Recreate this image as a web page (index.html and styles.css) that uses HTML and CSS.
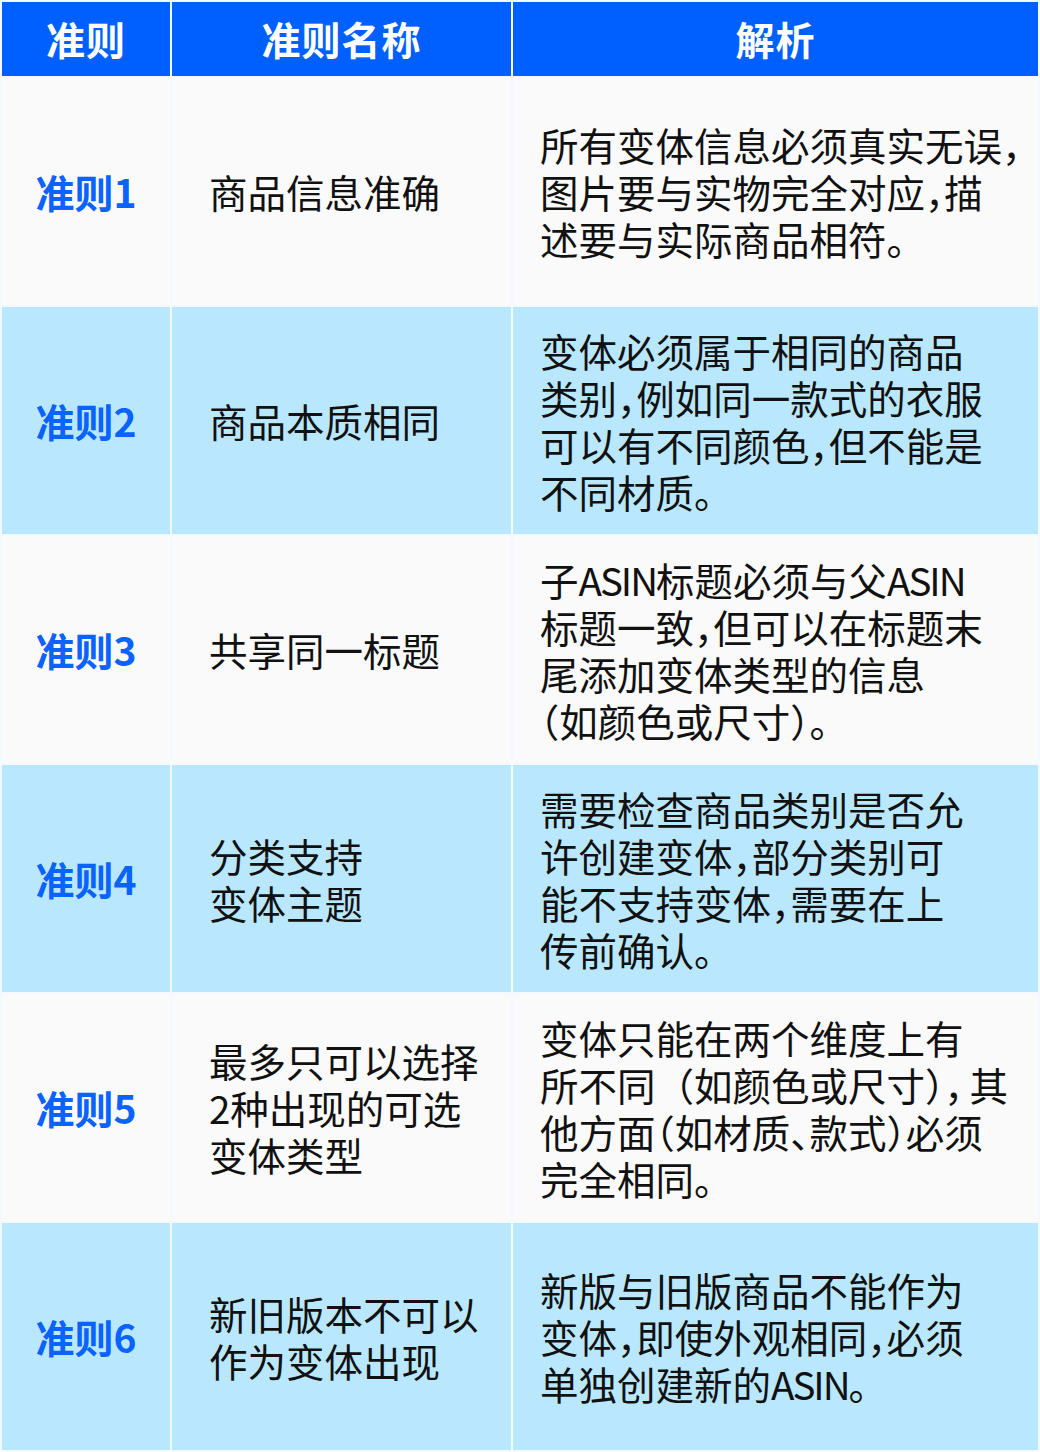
FILE: index.html
```html
<!DOCTYPE html>
<html lang="zh-CN">
<head>
<meta charset="utf-8">
<title>准则</title>
<link rel="stylesheet" href="styles.css">
</head>
<body>
<div class="table">
  <div class="th">准则</div>
  <div class="th">准则名称</div>
  <div class="th">解析</div>

  <div class="cell rule odd">准则1</div>
  <div class="cell name odd"><div class="txt">商品信息准确</div></div>
  <div class="cell desc odd"><div class="txt">所有变体信息必须真实无误，<br>图片要与实物完全对应，描<br>述要与实际商品相符。</div></div>

  <div class="cell rule even">准则2</div>
  <div class="cell name even"><div class="txt">商品本质相同</div></div>
  <div class="cell desc even"><div class="txt">变体必须属于相同的商品<br>类别，例如同一款式的衣服<br>可以有不同颜色，但不能是<br>不同材质。</div></div>

  <div class="cell rule odd">准则3</div>
  <div class="cell name odd"><div class="txt">共享同一标题</div></div>
  <div class="cell desc odd"><div class="txt">子<span class="latin">ASIN</span>标题必须与父<span class="latin">ASIN</span><br>标题一致，但可以在标题末<br>尾添加变体类型的信息<br>（如颜色或尺寸）。</div></div>

  <div class="cell rule even">准则4</div>
  <div class="cell name even"><div class="txt">分类支持<br>变体主题</div></div>
  <div class="cell desc even"><div class="txt">需要检查商品类别是否允<br>许创建变体，部分类别可<br>能不支持变体，需要在上<br>传前确认。</div></div>

  <div class="cell rule odd">准则5</div>
  <div class="cell name odd"><div class="txt">最多只可以选择<br>2种出现的可选<br>变体类型</div></div>
  <div class="cell desc odd"><div class="txt">变体只能在两个维度上有<br>所不同<span class="full">（</span>如颜色或尺寸），<span class="gap">其</span><br>他方面（如材质、款式）必须<br>完全相同。</div></div>

  <div class="cell rule even">准则6</div>
  <div class="cell name even"><div class="txt">新旧版本不可以<br>作为变体出现</div></div>
  <div class="cell desc even"><div class="txt">新版与旧版商品不能作为<br>变体，即使外观相同，必须<br>单独创建新的<span class="latin">ASIN</span>。</div></div>
</div>
</body>
</html>
```
FILE: styles.css
```css
html, body {
  margin: 0;
  padding: 0;
  background: #ffffff;
}

body {
  font-family: "Noto Sans CJK SC", "Noto Sans", sans-serif;
  width: 1040px;
  height: 1452px;
  overflow: hidden;
}

.table {
  display: grid;
  grid-template-columns: 168px 339px 525px;
  grid-template-rows: 74px repeat(6, 227px);
  gap: 2px;
  padding: 2px;
  background: #f4f9ff;
}

.th {
  background: #0060ff;
  color: #ffffff;
  font-weight: 700;
  font-size: 39px;
  display: flex;
  align-items: center;
  justify-content: center;
  letter-spacing: 1px;
  padding-bottom: 3px;
}

.cell {
  display: flex;
  align-items: center;
  font-size: 38.5px;
  line-height: 47px;
  color: #111111;
  white-space: nowrap;
}

.odd { background: #fafafa; }
.even { background: #b9e8fe; }

.rule {
  justify-content: center;
  color: #0a62ff;
  font-weight: 700;
  font-size: 39px;
}

.name {
  padding-left: 37px;
}

.desc {
  padding-left: 27px;
  font-feature-settings: "halt" 1;
}

.desc .full {
  font-feature-settings: "halt" 0;
}

.desc .gap {
  margin-left: 6px;
}

.desc .latin {
  letter-spacing: -2px;
}
```
